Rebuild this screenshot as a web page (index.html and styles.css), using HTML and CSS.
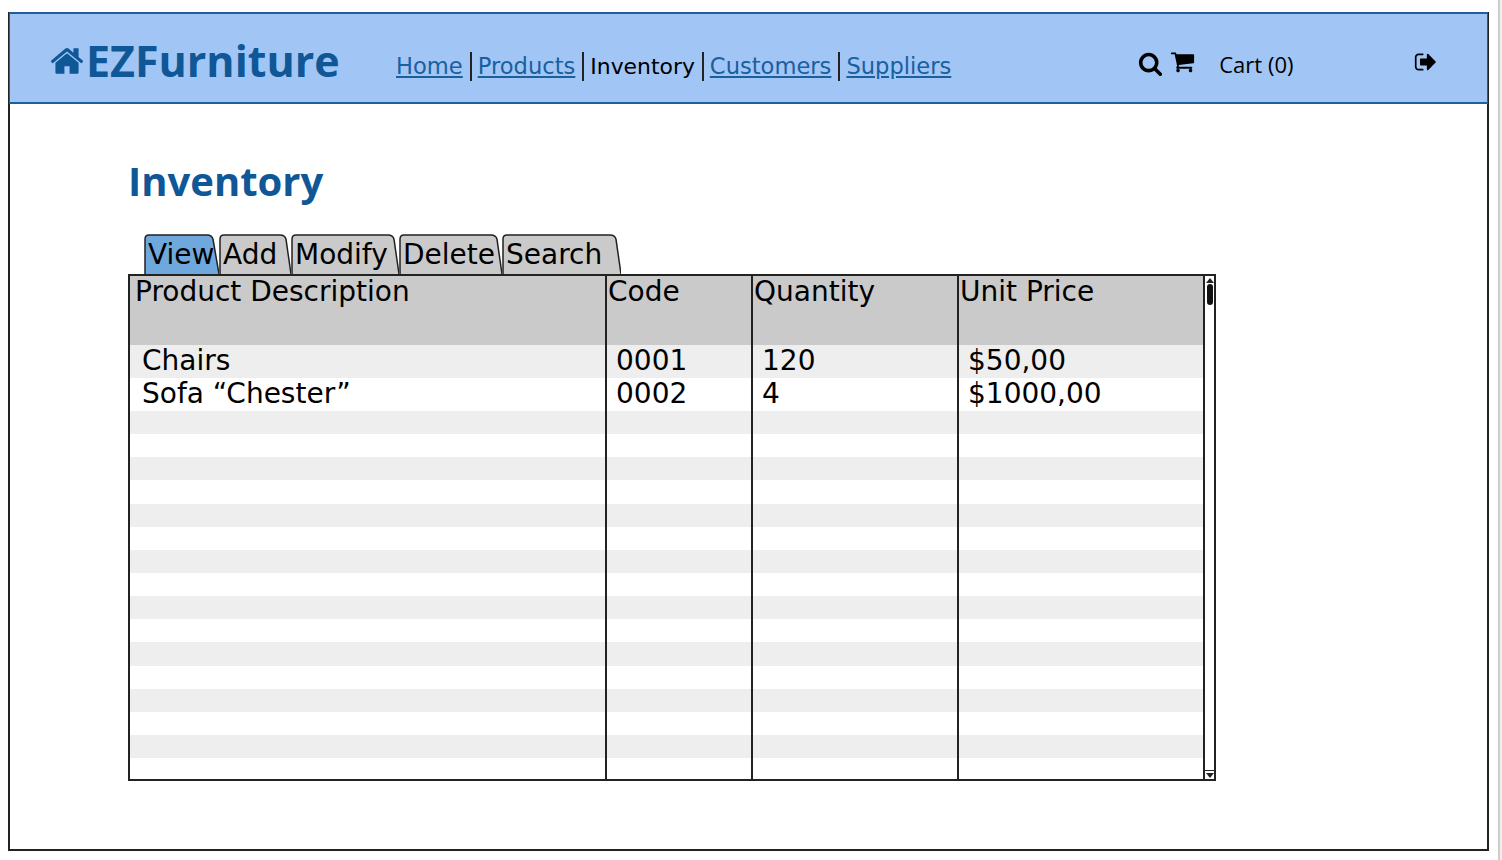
FILE: index.html
```html
<!DOCTYPE html>
<html lang="en">
<head>
    <meta charset="UTF-8">
    <meta name="viewport" content="width=device-width, initial-scale=1.0">
    <title>EZFurniture - Inventory</title>
    <link rel="stylesheet" href="styles.css">
</head>
<body>
<div class="page">
<div class="frame">
    <header class="topbar">
        <a class="brand" href="#">
            <svg class="brand-icon" viewBox="0 0 1792 1792"><path d="M1472 992v480q0 26-19 45t-45 19h-384v-384h-256v384h-384q-26 0-45-19t-19-45v-480q0-1 .5-3t.5-3l575-474 575 474q1 2 1 6zm223-69l-62 74q-8 9-21 11h-3q-13 0-21-7l-692-577-692 577q-12 8-24 7-13-2-21-11l-62-74q-8-10-7-23.5t11-21.5l719-599q32-26 76-26t76 26l244 204v-195q0-14 9-23t23-9h192q14 0 23 9t9 23v408l219 182q10 8 11 21.5t-7 23.5z"/></svg>
            <span>EZFurniture</span>
        </a>
        <nav class="menu">
            <a href="#">Home</a>
            <a href="#">Products</a>
            <span class="current">Inventory</span>
            <a href="#">Customers</a>
            <a href="#">Suppliers</a>
        </nav>
        <div class="tools">
            <svg class="icon-search" viewBox="0 0 1792 1792"><path d="M1216 832q0-185-131.500-316.500t-316.500-131.500-316.500 131.500-131.500 316.500 131.500 316.500 316.500 131.500 316.500-131.500 131.500-316.500zm512 832q0 52-38 90t-90 38q-54 0-90-38l-343-342q-179 124-399 124-143 0-273.500-55.500t-225-150-150-225-55.500-273.500 55.500-273.500 150-225 225-150 273.500-55.500 273.500 55.500 225 150 150 225 55.500 273.500q0 220-124 399l343 343q37 37 37 90z"/></svg>
            <svg class="icon-cart" viewBox="0 0 1792 1792"><path d="M704 1536q0 52-38 90t-90 38-90-38-38-90 38-90 90-38 90 38 38 90zm896 0q0 52-38 90t-90 38-90-38-38-90 38-90 90-38 90 38 38 90zm128-1088v512q0 24-16.500 42.500t-40.500 21.500l-1044 122q13 60 13 70 0 16-24 64h920q26 0 45 19t19 45-19 45-45 19h-1024q-26 0-45-19t-19-45q0-11 8-31.500t16-36 21.500-40 15.500-29.500l-177-823h-204q-26 0-45-19t-19-45 19-45 45-19h256q16 0 28.500 6.500t19.500 15.500 13 24.500 8 26 5.500 29.500 4.500 26h1201q26 0 45 19t19 45z"/></svg>
            <span class="cart-label">Cart (0)</span>
            <svg class="icon-out" viewBox="0 0 1792 1792"><path d="M704 1440q0 4 1 20t.5 26.500-3 23.500-10 19.500-20.500 6.500h-320q-119 0-203.500-84.500t-84.500-203.500v-704q0-119 84.500-203.500t203.500-84.500h320q13 0 22.500 9.500t9.500 22.500q0 4 1 20t.5 26.500-3 23.500-10 19.500-20.500 6.500h-320q-66 0-113 47t-47 113v704q0 66 47 113t113 47h312l11.500 1 11.500 3 8 5.500 7 9 2 13.500zm928-544q0 26-19 45l-544 544q-19 19-45 19t-45-19-19-45v-288h-448q-26 0-45-19t-19-45v-384q0-26 19-45t45-19h448v-288q0-26 19-45t45-19 45 19l544 544q19 19 19 45z"/></svg>
        </div>
    </header>

    <main class="content">
        <h1>Inventory</h1>
        <div class="tabs">
            <div class="tab tab-view active">
                <svg viewBox="0 0 75 38" preserveAspectRatio="none"><path d="M1 38V5Q1 1 5 1H63Q68 1 69 5L75 38"/></svg>
                <span>View</span>
            </div>
            <div class="tab tab-add">
                <svg viewBox="0 0 72 38" preserveAspectRatio="none"><path d="M1 38V5Q1 1 5 1H61Q66 1 67 5L72 38"/></svg>
                <span>Add</span>
            </div>
            <div class="tab tab-modify">
                <svg viewBox="0 0 108 38" preserveAspectRatio="none"><path d="M1 38V5Q1 1 5 1H97Q102 1 103 5L108 38"/></svg>
                <span>Modify</span>
            </div>
            <div class="tab tab-delete">
                <svg viewBox="0 0 103 38" preserveAspectRatio="none"><path d="M1 38V5Q1 1 5 1H92Q97 1 98 5L103 38"/></svg>
                <span>Delete</span>
            </div>
            <div class="tab tab-search">
                <svg viewBox="0 0 119 38" preserveAspectRatio="none"><path d="M1 38V5Q1 1 5 1H108Q113 1 114 5L119 38"/></svg>
                <span>Search</span>
            </div>
        </div>
        <div class="grid-wrap">
            <table class="grid">
                <colgroup>
                    <col class="c1"><col class="c2"><col class="c3"><col class="c4">
                </colgroup>
                <thead>
                    <tr>
                        <th>Product Description</th>
                        <th>Code</th>
                        <th>Quantity</th>
                        <th>Unit Price</th>
                    </tr>
                </thead>
                <tbody>
                    <tr class="filled"><td>Chairs</td><td>0001</td><td>120</td><td>$50,00</td></tr>
                    <tr class="filled"><td>Sofa “Chester”</td><td>0002</td><td>4</td><td>$1000,00</td></tr>
                    <tr><td></td><td></td><td></td><td></td></tr>
                    <tr><td></td><td></td><td></td><td></td></tr>
                    <tr><td></td><td></td><td></td><td></td></tr>
                    <tr><td></td><td></td><td></td><td></td></tr>
                    <tr><td></td><td></td><td></td><td></td></tr>
                    <tr><td></td><td></td><td></td><td></td></tr>
                    <tr><td></td><td></td><td></td><td></td></tr>
                    <tr><td></td><td></td><td></td><td></td></tr>
                    <tr><td></td><td></td><td></td><td></td></tr>
                    <tr><td></td><td></td><td></td><td></td></tr>
                    <tr><td></td><td></td><td></td><td></td></tr>
                    <tr><td></td><td></td><td></td><td></td></tr>
                    <tr><td></td><td></td><td></td><td></td></tr>
                    <tr><td></td><td></td><td></td><td></td></tr>
                    <tr><td></td><td></td><td></td><td></td></tr>
                    <tr class="last"><td></td><td></td><td></td><td></td></tr>
                </tbody>
            </table>
            <div class="scroller">
                <div class="arrow-up"></div>
                <div class="thumb"></div>
                <div class="arrow-down"></div>
            </div>
        </div>
    </main>
</div>
</div>
</body>
</html>
```

FILE: styles.css
```css
html, body {
    margin: 0;
    height: 860px;
    overflow: hidden;
    background-color: #fff;
}
body {
    font-family: "DejaVu Sans", sans-serif;
    color: #000;
    border-right: 2px solid #efefef;
    box-sizing: border-box;
}
.page {
    height: 860px;
    border-right: 2px solid #cdcdcd;
    box-sizing: border-box;
    padding: 12px 9px 9px 8px;
}
.frame {
    height: 839px;
    border: 2px solid #222;
    border-top: none;
    box-sizing: border-box;
}
.topbar {
    height: 92px;
    margin: 0 -1px;
    padding-top: 5px;
    background-color: #a1c6f5;
    border: 2px solid #1f5f9e;
    border-width: 2px 1px;
    box-sizing: border-box;
    display: flex;
    align-items: center;
}
.brand {
    display: flex;
    align-items: center;
    margin-left: 39px;
    width: 341px;
    color: #0f5796;
    text-decoration: none;
    font-family: "Open Sans", sans-serif;
    font-weight: 700;
    font-size: 43px;
}
.brand-icon {
    width: 36px;
    height: 36px;
    margin-right: 1px;
    fill: #0f5796;
}
.menu {
    display: flex;
    align-items: center;
    font-size: 22.6px;
    margin-top: 11px;
}
.menu a, .menu .current {
    padding: 0 7px 0 6px;
    border-left: 2px solid #222;
    line-height: 29px;
}
.menu a:first-child {
    border-left: none;
}
.menu a {
    color: #1a5f9e;
}
.menu .current {
    font-size: 21.9px;
}
.tools {
    display: flex;
    align-items: center;
    margin-left: 180px;
    margin-top: 6px;
}
.tools svg {
    fill: #000;
}
.icon-search {
    width: 25px;
    height: 25px;
}
.icon-cart {
    width: 25px;
    height: 25px;
    margin: -5px 0 0 7px;
}
.cart-label {
    font-family: "Open Sans", sans-serif;
    font-size: 22px;
    margin-left: 24px;
    width: 195px;
}
.icon-out {
    width: 24px;
    height: 24px;
    margin-top: -4px;
}
.content {
    padding: 0 0 0 118px;
}
h1 {
    margin: 50px 0 0;
    font-family: "Open Sans", sans-serif;
    font-size: 40px;
    line-height: 54px;
    font-weight: 700;
    color: #0f5796;
}
.tabs {
    display: flex;
    margin: 26px 0 0 16px;
    height: 40px;
    font-size: 28px;
}
.tab {
    position: relative;
    height: 40px;
    line-height: 41px;
    padding-left: 4px;
    box-sizing: border-box;
}
.tab span {
    position: relative;
}
.tab svg {
    position: absolute;
    top: 0;
    left: 0;
    width: 100%;
    height: 100%;
    fill: #cacaca;
    stroke: #222;
    stroke-width: 1.5;
}
.tab-view { width: 75px; }
.tab-add { width: 72px; }
.tab-modify { width: 108px; }
.tab-delete { width: 103px; }
.tab-search { width: 119px; }
.tab.active svg {
    fill: #6fa8dc;
}
.grid-wrap {
    display: flex;
    width: 1088px;
    height: 507px;
    box-sizing: border-box;
    border: 2px solid #222;
}
.grid {
    width: 1073px;
    border-collapse: collapse;
    table-layout: fixed;
    font-size: 28px;
}
.c1 { width: 476px; }
.c2 { width: 146px; }
.c3 { width: 206px; }
.c4 { width: 245px; }
th, td {
    padding: 0;
    border-left: 2px solid #222;
    text-align: left;
    font-weight: 400;
}
th:first-child, td:first-child {
    border-left: none;
}
th {
    height: 69px;
    background-color: #cacaca;
    vertical-align: top;
    padding-left: 1px;
    line-height: 32px;
}
th:first-child {
    padding-left: 5px;
}
td {
    height: 23.15px;
    line-height: 32px;
}
tbody tr:nth-child(odd) {
    background-color: #eee;
}
.filled td {
    height: 33px;
    padding-left: 9px;
    vertical-align: top;
}
.filled td:first-child {
    padding-left: 12px;
}
.last td {
    height: 21px;
}
.scroller {
    flex: 1;
    border-left: 2px solid #222;
    display: flex;
    flex-direction: column;
    align-items: center;
}
.arrow-up {
    width: 0;
    border: 4px solid transparent;
    border-top: none;
    border-bottom: 5px solid #222;
    margin-top: 2px;
}
.thumb {
    width: 6px;
    height: 21px;
    margin-top: 1px;
    background-color: #111;
    border-radius: 3px;
}
.arrow-down {
    width: 100%;
    height: 8px;
    margin-top: auto;
    border-top: 1px solid #222;
    display: flex;
    justify-content: center;
    align-items: center;
}
.arrow-down::after {
    content: "";
    border: 4px solid transparent;
    border-bottom: none;
    border-top: 5px solid #222;
}
```
